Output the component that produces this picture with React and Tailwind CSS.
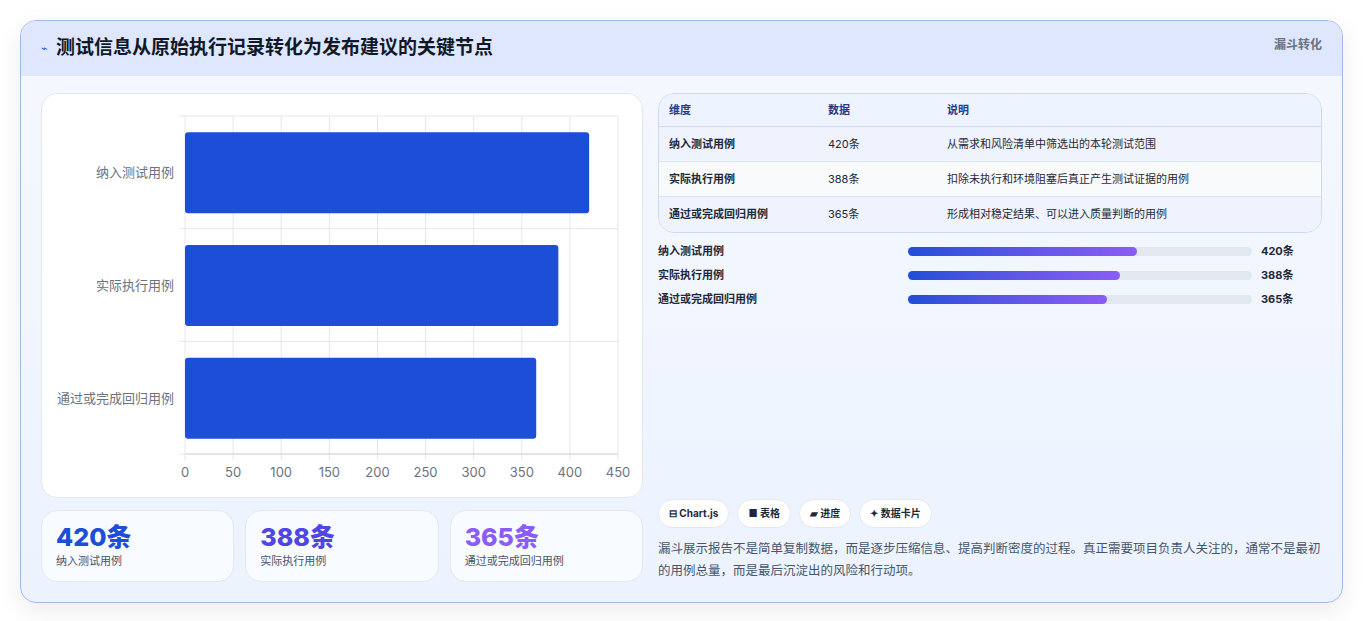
import React from 'react';

const rows = [
  { name: '纳入测试用例', v: 420, note: '从需求和风险清单中筛选出的本轮测试范围' },
  { name: '实际执行用例', v: 388, note: '扣除未执行和环境阻塞后真正产生测试证据的用例' },
  { name: '通过或完成回归用例', v: 365, note: '形成相对稳定结果、可以进入质量判断的用例' },
];

function Chart() {
  const x0 = 143, w = 433, top = 22, h = 338;
  const ticks = [0, 50, 100, 150, 200, 250, 300, 350, 400, 450];
  return (
    <svg width="602" height="403" className="block">
      {ticks.map((t) => {
        const x = x0 + (t / 450) * w;
        return (
          <g key={t}>
            <line x1={x} y1={top} x2={x} y2={top + h + 6} stroke="#e5e7eb" />
            <text x={x} y={top + h + 23} textAnchor="middle" fontSize="13" fill="#6b7280">{t}</text>
          </g>
        );
      })}
      {[0, 1, 2, 3].map((i) => (
        <line key={i} x1={x0 - 6} x2={x0 + w} y1={top + i * (h / 3)} y2={top + i * (h / 3)} stroke="#e5e7eb" />
      ))}
      <line x1={x0} x2={x0 + w} y1={top + h} y2={top + h} stroke="#d1d5db" />
      {rows.map((r, i) => {
        const cy = top + i * (h / 3) + h / 6;
        return (
          <g key={r.name}>
            <rect x={x0} y={cy - 40} width={(r.v / 450) * w} height={81} rx="3" fill="#1d4ed8" />
            <text x={x0 - 11} y={cy + 5} textAnchor="end" fontSize="13" fill="#6b7280">{r.name}</text>
          </g>
        );
      })}
    </svg>
  );
}

export default function App() {
  return (
    <div className="min-h-[621px] bg-white p-5" style={{ fontFamily: 'Inter, "Noto Sans CJK SC", sans-serif' }}>
      <div className="overflow-hidden rounded-2xl border border-[#a5b8ea] bg-gradient-to-b from-[#f5f8ff] to-[#ecf3ff] shadow-[0_8px_24px_rgba(0,0,0,0.08)]">
        <div className="flex h-[55px] items-center justify-between bg-[#dee7fd] pl-5 pr-5">
          <div className="flex items-center gap-2">
            <span className="text-[11px] text-[#1d4ed8]">⌁</span>
            <span className="text-[19px] font-bold text-[#111827]">测试信息从原始执行记录转化为发布建议的关键节点</span>
          </div>
          <span className="self-start pt-4 text-xs font-bold text-[#6b7280]">漏斗转化</span>
        </div>
        <div className="flex gap-[15px] p-5 pt-[17px]">
          <div className="flex w-[602px] flex-col gap-3">
            <div className="rounded-2xl border border-[#e5e7eb] bg-white">
              <Chart />
            </div>
            <div className="grid grid-cols-3 gap-[11px]">
              {[
                ['420条', '纳入测试用例', 'text-[#1d4ed8]'],
                ['388条', '实际执行用例', 'text-[#4f46e5]'],
                ['365条', '通过或完成回归用例', 'text-[#8b5cf6]'],
              ].map(([n, l, c]) => (
                <div key={l} className="h-[72px] rounded-2xl border border-[#e2e8f0] bg-[#f8fbff] px-3.5 pt-2.5">
                  <div className={`text-[25px] leading-8 font-extrabold ${c}`}>{n}</div>
                  <div className="text-[11px] text-[#475569]">{l}</div>
                </div>
              ))}
            </div>
          </div>
          <div className="flex w-[666px] flex-col">
            <div className="overflow-hidden rounded-2xl border border-[#cfdaf0] text-[11px]">
              <div className="grid h-[33px] grid-cols-[159px_119px_1fr] items-center border-b border-[#cfdaf0] bg-[#eef4ff] px-[10px] font-bold text-[#1e3a8a]">
                <span>维度</span><span>数据</span><span>说明</span>
              </div>
              {rows.map((r, i) => (
                <div key={r.name} className={`grid h-[35px] grid-cols-[159px_119px_1fr] items-center px-[10px] text-[#1f2937] ${i === 1 ? 'bg-[#f8fafc]' : 'bg-[#eef3fd]'} ${i < 2 ? 'border-b border-[#dbe4f3]' : ''}`}>
                  <span className="font-semibold">{r.name}</span><span>{r.v}条</span><span>{r.note}</span>
                </div>
              ))}
            </div>
            <div className="mt-[10px] flex flex-col gap-[8px]">
              {rows.map((r) => (
                <div key={r.name} className="flex h-[16px] items-center text-[11px] text-[#1f2937]">
                  <span className="w-[250px] font-semibold">{r.name}</span>
                  <div className="h-[9px] w-[344px] rounded-full bg-[#e2e8f0]">
                    <div className="h-full rounded-full bg-gradient-to-r from-[#1d4ed8] to-[#8b5cf6]" style={{ width: `${(r.v / 630) * 100}%` }} />
                  </div>
                  <span className="ml-[9px] font-bold">{r.v}条</span>
                </div>
              ))}
            </div>
            <div className="mt-auto flex gap-2">
              {['⊟ Chart.js', '■ 表格', '▰ 进度', '✦ 数据卡片'].map((t) => (
                <span key={t} className="rounded-full border border-[#e5e7eb] bg-white px-[10px] py-[6px] text-[10px] font-bold text-[#1f2937]">{t}</span>
              ))}
            </div>
            <p className="mt-[10px] text-[12.5px] leading-[22px] text-[#475569]">
              漏斗展示报告不是简单复制数据，而是逐步压缩信息、提高判断密度的过程。真正需要项目负责人关注的，通常不是最初的用例总量，而是最后沉淀出的风险和行动项。
            </p>
          </div>
        </div>
      </div>
    </div>
  );
}
